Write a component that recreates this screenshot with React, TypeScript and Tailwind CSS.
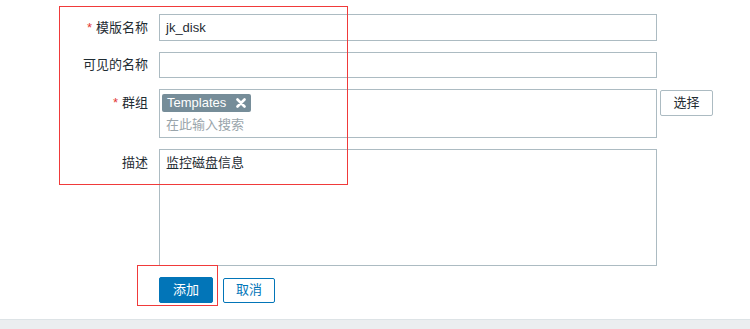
export default function App() {
  return (
    <div className="relative flex h-[329px] w-[750px] flex-col bg-white font-['Liberation_Sans','Noto_Sans_CJK_SC',sans-serif] text-[13px] text-[#1f2c33]">
      <div className="flex flex-1 flex-col pt-[14px]">
        {/* 模版名称 */}
        <div className="flex items-center gap-[11px]">
          <label className="w-[148px] text-right leading-[18px]">
            <span className="mr-[4px] text-[#e33734]">*</span>模版名称
          </label>
          <div className="flex h-[27px] w-[498px] items-center border border-[#acbbc2] px-[6px]">jk_disk</div>
        </div>

        {/* 可见的名称 */}
        <div className="mt-[11px] flex items-center gap-[11px]">
          <label className="w-[148px] text-right leading-[18px]">可见的名称</label>
          <div className="h-[26px] w-[498px] border border-[#acbbc2]"></div>
        </div>

        {/* 群组 */}
        <div className="mt-[11px] flex items-start gap-[11px]">
          <label className="w-[148px] pt-[5px] text-right leading-[18px]">
            <span className="mr-[4px] text-[#e33734]">*</span>群组
          </label>
          <div className="flex h-[49px] w-[498px] flex-col border border-[#acbbc2] pl-[2px] pt-[4px]">
            <span className="flex h-[18px] w-fit items-center gap-[10px] rounded-[2px] bg-[#768d99] pl-[5px] pr-[5px] text-white">
              Templates
              <svg width="10" height="10" viewBox="0 0 10 10">
                <path d="M1.5 1.5 L8.5 8.5 M8.5 1.5 L1.5 8.5" stroke="white" strokeWidth="2.6" strokeLinecap="round" />
              </svg>
            </span>
            <span className="mt-[4px] pl-[4px] leading-[18px] text-[#9aa5ab]">在此输入搜索</span>
          </div>
          <button className="ml-[-8px] mt-[1px] h-[26px] w-[53px] rounded-[2px] border border-[#acbbc2] bg-white text-[#1f2c33]">
            选择
          </button>
        </div>

        {/* 描述 */}
        <div className="mt-[11px] flex items-start gap-[11px]">
          <label className="w-[148px] pt-[5px] text-right leading-[18px]">描述</label>
          <div className="h-[117px] w-[498px] border border-[#acbbc2] px-[6px] pt-[4px] leading-[18px]">监控磁盘信息</div>
        </div>

        {/* buttons */}
        <div className="mt-[11px] flex items-center gap-[10px] pl-[159px]">
          <button className="h-[26px] w-[54px] rounded-[2px] border border-[#0275b8] bg-[#0275b8] text-white">添加</button>
          <button className="h-[25px] w-[52px] rounded-[2px] border border-[#0275b8] bg-white text-[#0275b8]">取消</button>
        </div>
      </div>

      {/* footer */}
      <div className="h-[10px] border-t border-[#dde3e6] bg-[#ebeef0]"></div>

      {/* annotation boxes */}
      <div className="pointer-events-none absolute left-[59px] top-[6px] h-[179px] w-[289px] border border-solid border-[#f03a3a]"></div>
      <div className="pointer-events-none absolute left-[137px] top-[265px] h-[41px] w-[81px] border border-solid border-[#f03a3a]"></div>
    </div>
  )
}
